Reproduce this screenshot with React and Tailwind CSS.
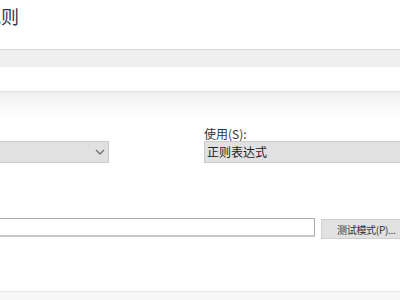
export default function App() {
  const font = { fontFamily: '"Noto Sans CJK SC", "Microsoft YaHei", sans-serif' };
  return (
    <div className="w-[400px] h-[300px] overflow-hidden bg-[#fefefe] relative" style={font}>
      <div className="h-[49px] pt-[4px]">
        <div className="ml-[-17px] text-[18px] leading-[24px] text-[#2b3a4e] whitespace-nowrap">规则</div>
      </div>
      <div className="h-[18px] border-t border-[#d8d8d8] bg-[#efefef]" />
      <div className="h-[24px] bg-[#fefefe]" />
      <div className="h-[1px] bg-[#e2e2e2]" />
      <div className="h-[24px] bg-gradient-to-b from-[#f0f0f0] to-[#fefefe]" />
      <div className="flex pt-[10px]">
        <div className="w-[119px] shrink-0 ml-[-10px] pt-[15px]">
          <div className="h-[22px] border border-[#cacaca] bg-[#e1e1e1] flex items-center justify-end pr-[3px]">
            <svg width="10" height="6" viewBox="0 0 10 6">
              <path d="M1 1 L5 5 L9 1" stroke="#707070" strokeWidth="1.3" fill="none" />
            </svg>
          </div>
        </div>
        <div className="ml-[95px] flex-1 mr-[-10px]">
          <div className="text-[12px] leading-[15px] text-[#333] whitespace-nowrap">使用(S):</div>
          <div className="h-[22px] border border-[#cacaca] bg-[#e1e1e1] flex items-center pl-[2px] text-[12px] text-[#222]">
            正则表达式
          </div>
        </div>
      </div>
      <div className="flex mt-[55px] items-start">
        <div className="shrink-0 ml-[-10px] w-[325px] h-[19px] border border-[#ababab] border-b-2 border-b-[#c6c6c6] bg-[#fefefe]" />
        <div className="shrink-0 ml-[6px] mt-[1px] w-[90px] h-[20px] border border-[#cfcfcf] bg-[#e1e1e1] flex items-center pl-[15px] text-[10px] tracking-[-0.3px] text-[#333] whitespace-nowrap">
          测试模式(P)...
        </div>
      </div>
      <div className="mt-[52px] h-[1px] bg-[#e6e6e6]" />
      <div className="h-[10px] bg-[#f7f7f7]" />
    </div>
  );
}
